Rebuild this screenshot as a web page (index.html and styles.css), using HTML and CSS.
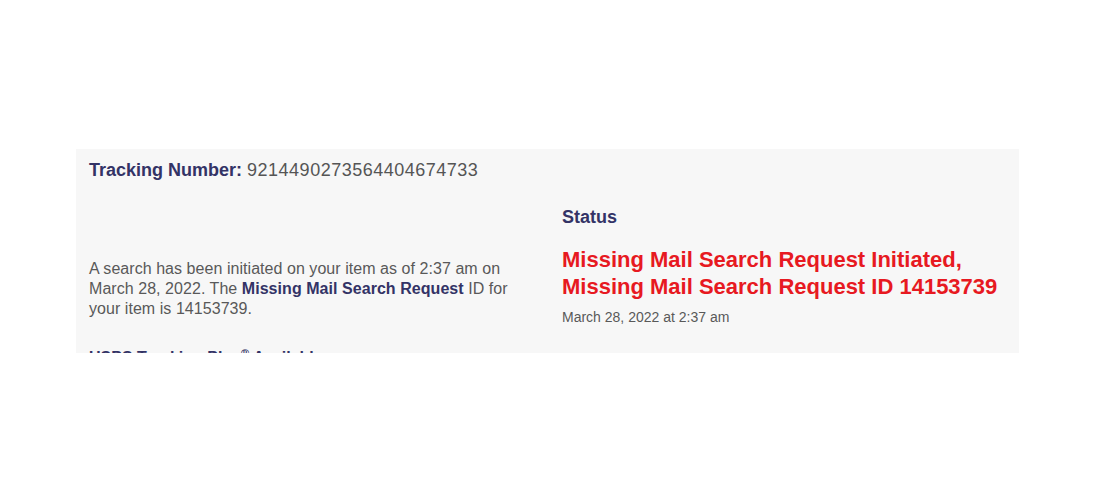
FILE: index.html
```html
<!DOCTYPE html>
<html lang="en">
<head>
<meta charset="utf-8">
<title>Tracking</title>
<link rel="stylesheet" href="styles.css">
</head>
<body>
<div class="page">
  <section class="panel">
    <div class="tracking-line"><span class="label">Tracking Number:</span> <span class="number">9214490273564404674733</span></div>
    <div class="columns">
      <div class="left">
        <p class="desc">A search has been initiated on your item as of 2:37 am on March 28, 2022. The <strong>Missing Mail Search Request</strong> ID for your item is 14153739.</p>
        <p class="plus">USPS Tracking Plus<sup>®</sup> Available <span class="chev">&#8250;</span></p>
      </div>
      <div class="right">
        <h3 class="status-label">Status</h3>
        <h2 class="status">Missing Mail Search Request Initiated, Missing Mail Search Request ID 14153739</h2>
        <p class="date">March 28, 2022 at 2:37 am</p>
      </div>
    </div>
  </section>
</div>
</body>
</html>
```
FILE: styles.css
```css
html, body {
  margin: 0;
  padding: 0;
  background: #ffffff;
}
body {
  font-family: "Liberation Sans", Arial, Helvetica, sans-serif;
  color: #555555;
}
.page {
  padding: 149px 77px 0 76px;
}
.panel {
  background: #f7f7f7;
  height: 204px;
  overflow: hidden;
  padding: 11px 13px 0 13px;
  box-sizing: border-box;
}
.tracking-line {
  font-size: 18px;
  line-height: 20px;
}
.label {
  font-weight: bold;
  color: #333366;
}
.number {
  color: #555555;
  letter-spacing: 0.5px;
}
.columns {
  display: flex;
}
.left {
  width: 473px;
  flex: none;
}
.right {
  flex: 1;
}
.desc {
  margin: 79px 0 0 0;
  font-size: 16px;
  line-height: 20px;
  width: 440px;
  color: #595959;
  letter-spacing: 0.05px;
}
.desc strong {
  color: #333366;
}
.plus {
  margin: 27px 0 0 0;
  font-size: 16px;
  line-height: 20px;
  font-weight: bold;
  color: #333366;
}
.plus sup {
  font-size: 11px;
  line-height: 0;
}
.chev {
  color: #e71921;
  font-size: 20px;
}
.status-label {
  margin: 27px 0 0 0;
  font-size: 18px;
  line-height: 20px;
  color: #333366;
}
.status {
  margin: 19px 0 0 0;
  font-size: 22px;
  line-height: 27px;
  color: #e71921;
  font-weight: bold;
}
.date {
  margin: 8px 0 0 0;
  font-size: 14px;
  line-height: 18px;
  color: #595959;
}
```
